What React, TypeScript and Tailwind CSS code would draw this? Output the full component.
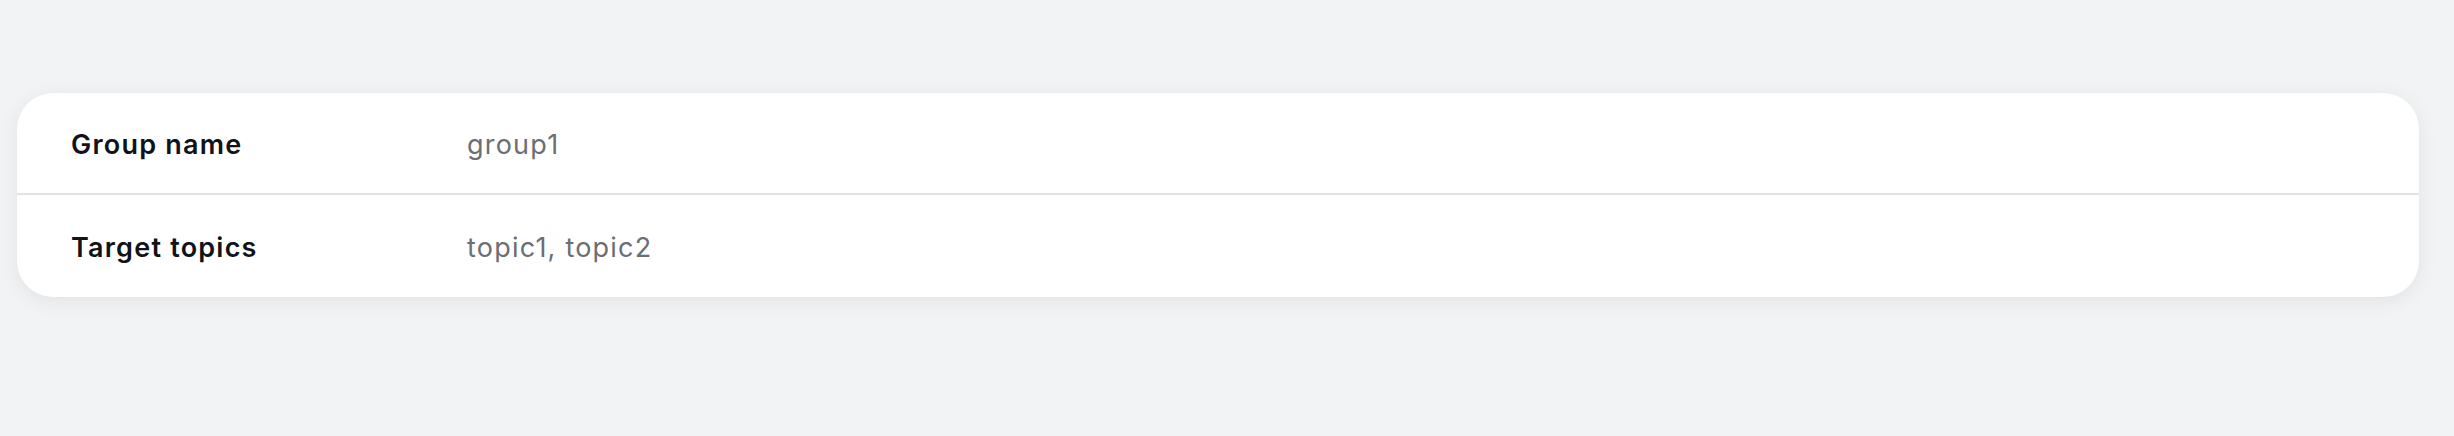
const rows = [
  { label: "Group name", value: "group1" },
  { label: "Target topics", value: "topic1, topic2" },
];

export default function App() {
  return (
    <main className="h-[436px] w-full bg-[#f2f3f5] pl-[17px] pr-[35px] pt-[93px] font-['Inter','Noto_Sans',sans-serif]">
      <div className="overflow-hidden rounded-[36px] bg-white shadow-[0_4px_20px_rgba(0,0,0,0.07)]">
        {rows.map((row, i) => (
          <div
            key={row.label}
            className={`grid grid-cols-[396px_1fr] items-center px-[54px] pt-[5px] ${
              i > 0 ? "h-[104px] border-t-2 border-[#e2e3e5]" : "h-[100px]"
            }`}
          >
            <span className="text-[27px] font-semibold tracking-[0.045em] text-[#111318]">
              {row.label}
            </span>
            <span className="text-[27px] tracking-[0.045em] text-[#6b6e75]">
              {row.value}
            </span>
          </div>
        ))}
      </div>
    </main>
  );
}
